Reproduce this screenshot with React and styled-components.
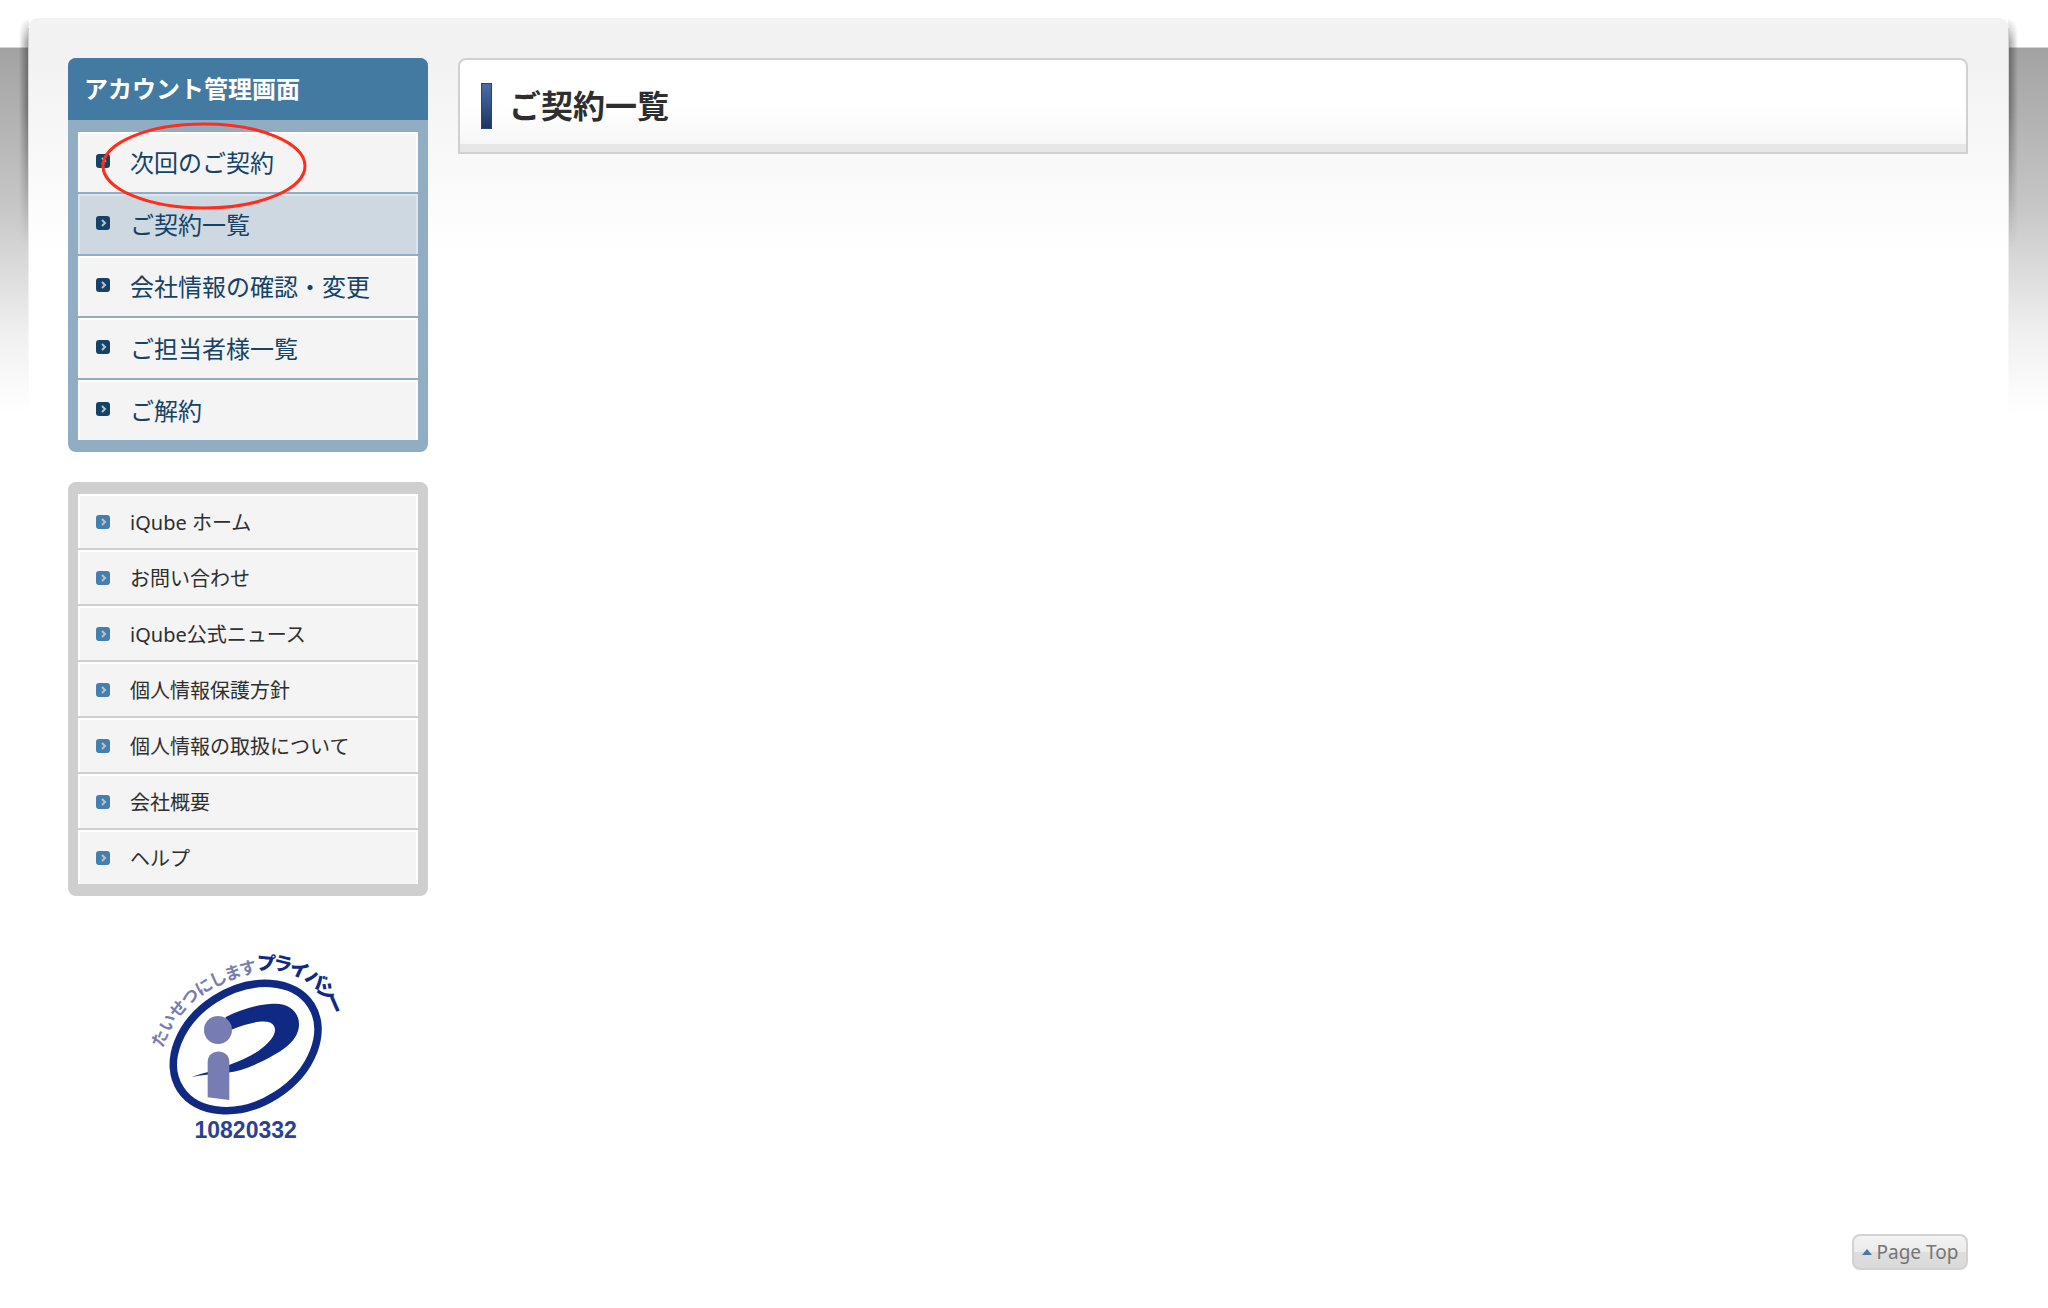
import React from "react"
import styled, { createGlobalStyle } from "styled-components"

const GlobalStyle = createGlobalStyle`
  * {
    box-sizing: border-box;
  }
  body {
    margin: 0;
    background: #fff;
    color: #2e2e2e;
    font-family: "Noto Sans", "Noto Sans CJK JP", sans-serif;
  }
`

// page
const Page = styled.div`
  isolation: isolate;
  padding: 18px 39px 0 28px;
  background:
    linear-gradient(#d4d4d4, #d4d4d4) 0 47px / 100% 1px no-repeat,
    linear-gradient(#a2a2a2, #c6c6c6 43%, #f0f0f0 78%, #fff) 0 48px / 100% 366px no-repeat;
`

const Sheet = styled.div`
  position: relative;
  padding: 40px 41px 36px 40px;
  border-radius: 10px 10px 0 0;
  background:
    linear-gradient(#d0d0d0, #fff) 0 10px / 1px 390px no-repeat,
    linear-gradient(#d0d0d0, #fff) 100% 10px / 1px 390px no-repeat,
    linear-gradient(#f2f2f2, #f2f2f2 40px, #fff 240px);

  &::before {
    content: "";
    position: absolute;
    z-index: -1;
    top: 0;
    left: -9px;
    right: -9px;
    height: 230px;
    border-radius: 14px 14px 0 0;
    background:
      linear-gradient(to left, rgba(0, 0, 0, 0.4), transparent) left / 10px 100% no-repeat,
      linear-gradient(to right, rgba(0, 0, 0, 0.4), transparent) right / 10px 100% no-repeat;
    mask-image: linear-gradient(transparent, #000 24px, #000 90px, transparent);
  }
`

const Columns = styled.div`
  display: flex;
  align-items: flex-start;
  gap: 30px;
`

// sidebar
const Sidebar = styled.aside`
  width: 360px;
  flex-shrink: 0;
`

const Panel = styled.nav`
  margin-bottom: 30px;
  border-radius: 8px;
  overflow: hidden;
  background: ${(props) => (props.$account ? "#90adc4" : "#cfcfcf")};
`

const PanelTitle = styled.h2`
  margin: 0;
  padding: 0 16px;
  background: #437aa2;
  color: #fff;
  font-size: 24px;
  font-weight: 700;
  line-height: 62px;
`

const Menu = styled.ul`
  display: flex;
  flex-direction: column;
  gap: 2px;
  margin: 0;
  padding: 12px 10px;
  list-style: none;
`

const MenuItem = styled.li`
  position: relative;
`

const MenuLink = styled.a`
  display: flex;
  align-items: center;
  gap: 20px;
  height: ${(props) => (props.$large ? "60px" : "54px")};
  padding: ${(props) => (props.$large ? "0 0 4px 16px" : "0 0 1px 16px")};
  border: 2px solid ${(props) => (props.$active ? "#dde5ec" : "#fff")};
  border-bottom: 0;
  background: ${(props) => (props.$active ? "#ced8e1" : "#f4f4f4")};
  color: ${(props) => (props.$large ? "#154266" : "#2e2e2e")};
  font-size: ${(props) => (props.$large ? "24px" : "20px")};
  text-decoration: none;
`

const Marker = styled.svg`
  position: absolute;
  z-index: 1;
  top: -10px;
  left: 22px;
  pointer-events: none;
`

const Mark = styled.svg`
  display: block;
  width: 230px;
  height: 230px;
  margin: 32px 0 0 62px;
`

const MarkText = styled.text`
  font-feature-settings: "palt";
`

// main column
const Main = styled.main`
  flex: 1;
`

const TitleBar = styled.div`
  display: flex;
  align-items: center;
  gap: 17px;
  height: 96px;
  padding: 0 0 0 21px;
  border: 2px solid #d0d0d0;
  border-radius: 8px 8px 0 0;
  background:
    linear-gradient(#e7e7e7, #e7e7e7) bottom / 100% 8px no-repeat,
    linear-gradient(#fff 50%, #f5f5f5);
`

const Accent = styled.span`
  width: 11px;
  height: 46px;
  border: 1px solid #24427f;
  background: linear-gradient(#4a6cac, #1d3565);
`

const Title = styled.h1`
  margin: 0;
  font-size: 32px;
  font-weight: 700;
  line-height: 48px;
`

// footer
const Footer = styled.footer`
  display: flex;
  justify-content: flex-end;
  padding-top: 76px;
`

const PageTop = styled.a`
  display: flex;
  align-items: center;
  justify-content: center;
  gap: 5px;
  width: 116px;
  height: 36px;
  border: 2px solid #d2d2d2;
  border-radius: 8px;
  background: linear-gradient(#f3f3f3, #ebebeb 50%, #dedede 50%, #dadada);
  color: #757575;
  font-family: "Noto Sans", sans-serif;
  font-size: 19px;
  text-decoration: none;
`

const accountLinks = [
  "次回のご契約",
  "ご契約一覧",
  "会社情報の確認・変更",
  "ご担当者様一覧",
  "ご解約",
]

const siteLinks = [
  "iQube ホーム",
  "お問い合わせ",
  "iQube公式ニュース",
  "個人情報保護方針",
  "個人情報の取扱について",
  "会社概要",
  "ヘルプ",
]

const Bullet = ({ color }) => (
  <svg width="14" height="14" viewBox="0 0 14 14" aria-hidden="true">
    <rect width="14" height="14" rx="3" fill={color} />
    <path d="M6 4l3 3-3 3" fill="none" stroke="#b3c4d1" strokeWidth="2" />
  </svg>
)

const PrivacyMark = () => (
  <Mark viewBox="0 0 690 690" role="img" aria-label="プライバシーマーク">
    <defs>
      <path id="arc-left" d="M98 361C130 258 230 158 390 132" />
    </defs>
    <ellipse
      cx="347"
      cy="357"
      rx="233"
      ry="171"
      transform="rotate(-32.6 347 357)"
      fill="none"
      stroke="#102a83"
      strokeWidth="23"
    />
    <path
      d="M286 268C340 240 400 226 436 227C480 228 508 252 507 292C505 336 462 366 420 388C370 414 330 430 290 434C250 438 220 440 185 447C220 434 260 428 297 411C350 392 388 372 414 344C432 326 440 308 432 294C420 272 372 278 302 306Z"
      fill="#102a83"
    />
    <circle cx="264" cy="306" r="42" fill="#777db3" />
    <path d="M233 508V402C233 360 298 360 298 402V516Z" fill="#777db3" />
    <MarkText fill="#777db3" fontSize="51" fontWeight="700">
      <textPath href="#arc-left">たいせつにします</textPath>
    </MarkText>
    <text
      x="378 425 473 521 556 583"
      y="124 121 131 154 183 211"
      rotate="5 14 25 38 48 66"
      fill="#102a83"
      fontSize="57"
      fontWeight="900"
    >
      プライバシー
    </text>
    <text
      x="347"
      y="629"
      textAnchor="middle"
      fill="#2b4192"
      fontFamily="Liberation Sans, sans-serif"
      fontSize="69"
      fontWeight="700"
    >
      10820332
    </text>
  </Mark>
)

const App = () => {
  return (
    <>
      <GlobalStyle />
      <Page id="top">
        <Sheet>
          <Columns>
            <Sidebar>
              <Panel $account>
                <PanelTitle>アカウント管理画面</PanelTitle>
                <Menu>
                  {accountLinks.map((label, i) => (
                    <MenuItem key={label}>
                      <MenuLink href="#" $large $active={i === 1}>
                        <Bullet color="#154266" />
                        {label}
                      </MenuLink>
                      {i === 0 && (
                        <Marker width="208" height="90" viewBox="0 0 208 90">
                          <ellipse cx="104" cy="44" rx="101" ry="42" fill="none" stroke="#ff2d1c" strokeWidth="3" />
                        </Marker>
                      )}
                    </MenuItem>
                  ))}
                </Menu>
              </Panel>
              <Panel>
                <Menu>
                  {siteLinks.map((label) => (
                    <MenuItem key={label}>
                      <MenuLink href="#">
                        <Bullet color="#467fac" />
                        {label}
                      </MenuLink>
                    </MenuItem>
                  ))}
                </Menu>
              </Panel>
              <PrivacyMark />
            </Sidebar>
            <Main>
              <TitleBar>
                <Accent />
                <Title>ご契約一覧</Title>
              </TitleBar>
            </Main>
          </Columns>
          <Footer>
            <PageTop href="#top">
              <svg width="10" height="6" viewBox="0 0 10 6" aria-hidden="true">
                <path d="M5 0l5 6H0z" fill="#3f7ca8" />
              </svg>
              Page Top
            </PageTop>
          </Footer>
        </Sheet>
      </Page>
    </>
  )
}

export default App
